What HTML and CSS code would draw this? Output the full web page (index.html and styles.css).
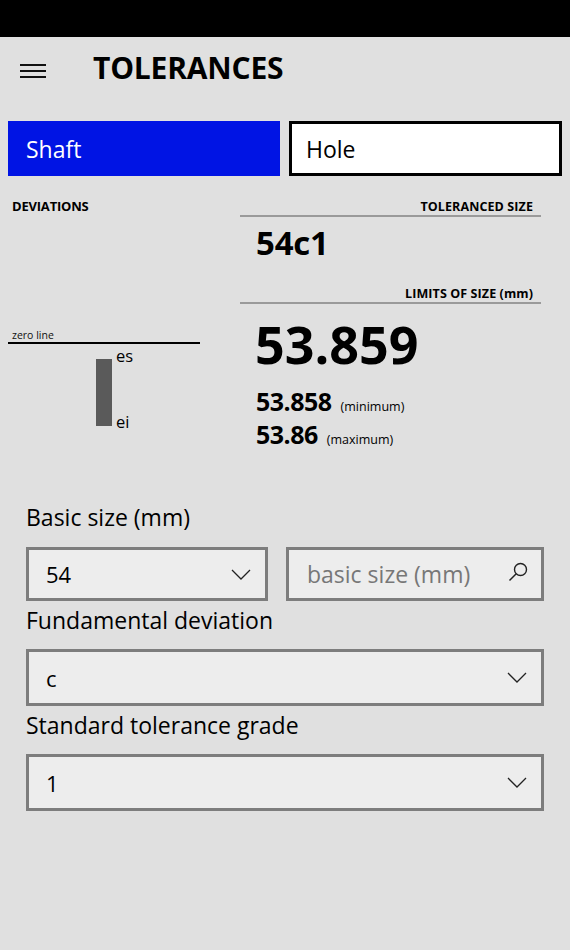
FILE: index.html
```html
<!DOCTYPE html>
<html>
<head>
<meta charset="utf-8">
<link rel="stylesheet" href="styles.css">
</head>
<body>
<div class="statusbar"></div>
<header class="header">
  <div class="hamburger"><span></span><span></span><span></span></div>
  <h1 class="title">TOLERANCES</h1>
</header>
<div class="tabs">
  <div class="tab tab-active">Shaft</div>
  <div class="tab tab-inactive">Hole</div>
</div>
<section class="results">
  <div class="deviations">
    <div class="dev-title">DEVIATIONS</div>
    <div class="zero-label">zero line</div>
    <div class="zero-line"></div>
    <div class="dev-chart">
      <div class="dev-bar"></div>
      <div class="dev-labels"><span>es</span><span>ei</span></div>
    </div>
  </div>
  <div class="sizes">
    <div class="section-head">TOLERANCED SIZE</div>
    <div class="tol-size">54c1</div>
    <div class="section-head limits-head">LIMITS OF SIZE (mm)</div>
    <div class="mean-size">53.859</div>
    <div class="limit limit-first"><span class="limit-val">53.858</span><span class="limit-note">(minimum)</span></div>
    <div class="limit"><span class="limit-val">53.86</span><span class="limit-note">(maximum)</span></div>
  </div>
</section>
<section class="form">
  <div class="field-label">Basic size (mm)</div>
  <div class="row">
    <div class="combo"><span>54</span>
      <svg class="chev" viewBox="0 0 20 11" width="20" height="11"><path d="M1 1 L10 10 L19 1" fill="none" stroke="#222" stroke-width="1.3"/></svg>
    </div>
    <div class="search"><span class="placeholder">basic size (mm)</span>
      <svg class="search-icon" viewBox="0 0 22 22" width="22" height="22"><circle cx="13.5" cy="8.5" r="6" fill="none" stroke="#222" stroke-width="1.4"/><path d="M9.2 12.8 L2.5 19.5" stroke="#222" stroke-width="1.5" fill="none"/></svg>
    </div>
  </div>
  <div class="field-label">Fundamental deviation</div>
  <div class="combo combo-wide"><span>c</span>
    <svg class="chev" viewBox="0 0 20 11" width="20" height="11"><path d="M1 1 L10 10 L19 1" fill="none" stroke="#222" stroke-width="1.3"/></svg>
  </div>
  <div class="field-label">Standard tolerance grade</div>
  <div class="combo combo-wide"><span>1</span>
    <svg class="chev" viewBox="0 0 20 11" width="20" height="11"><path d="M1 1 L10 10 L19 1" fill="none" stroke="#222" stroke-width="1.3"/></svg>
  </div>
</section>
</body>
</html>
```
FILE: styles.css
```css
* { box-sizing: border-box; }
html, body { margin: 0; padding: 0; }
body {
  width: 570px;
  height: 950px;
  background: #e0e0e0;
  font-family: "Open Sans", "Noto Sans", sans-serif;
  color: #000;
  overflow: hidden;
}
.statusbar { height: 37px; background: #000; }
.header {
  height: 84px;
  display: flex;
  align-items: flex-start;
  padding-top: 13px;
}
.hamburger {
  width: 26px;
  margin-left: 20px;
  margin-top: 14px;
  display: flex;
  flex-direction: column;
  gap: 4px;
}
.hamburger span { display: block; height: 2px; background: #111; }
.title {
  margin: 0 0 0 47px;
  font-size: 30px;
  line-height: 36px;
  font-weight: 700;
  letter-spacing: -0.2px;
}
.tabs {
  display: grid;
  grid-template-columns: 272px 273px;
  gap: 9px;
  margin: 0 8px;
  height: 55px;
}
.tab {
  display: flex;
  align-items: center;
  font-size: 23px;
}
.tab-active { background: #0014e4; color: #fff; padding-left: 18px; }
.tab-inactive { background: #fff; border: 3px solid #000; padding-left: 14px; }

.results {
  display: grid;
  grid-template-columns: 192px 301px;
  gap: 40px;
  margin-left: 8px;
  height: 310px;
}
.deviations { padding-top: 22px; }
.dev-title { font-size: 13px; font-weight: 700; padding-left: 4px; line-height: 16px; letter-spacing: -0.2px; }
.zero-label { margin-top: 114px; font-size: 10.5px; padding-left: 4px; line-height: 14px; color: #111; }
.zero-line { height: 2px; background: #000; }
.dev-chart { display: flex; margin-left: 88px; margin-top: 15px; }
.dev-bar { width: 16px; height: 67px; background: #5a5a5a; }
.dev-labels {
  display: flex;
  flex-direction: column;
  justify-content: space-between;
  font-size: 16.5px;
  line-height: 18px;
  margin-top: -12px;
  height: 84px;
  padding-left: 4px;
}
.sizes { padding-top: 22px; }
.section-head {
  font-size: 12.5px;
  font-weight: 700;
  text-align: right;
  padding-right: 8px;
  line-height: 17px;
  border-bottom: 2px solid #9a9a9a;
  letter-spacing: 0.1px;
}
.tol-size {
  font-size: 33px;
  font-weight: 700;
  line-height: 44px;
  padding-left: 16px;
  margin-top: 4px;
  letter-spacing: -0.2px;
}
.limits-head { margin-top: 20px; }
.mean-size {
  font-size: 52px;
  font-weight: 700;
  line-height: 72px;
  padding-left: 15px;
  margin-top: 4px;
  letter-spacing: 0px;
  height: 72px;
}
.limit { padding-left: 16px; display: flex; align-items: baseline; height: 33px; line-height: 33px; }
.limit-first { margin-top: 5px; }
.limit-val { font-size: 25px; font-weight: 700; letter-spacing: -0.5px; line-height: 33px; }
.limit-note { font-size: 12.5px; margin-left: 9px; line-height: 33px; }

.form { padding: 0 26px; }
.field-label { font-size: 23px; line-height: 30px; margin-top: 16px; margin-bottom: 15px; }
.row {
  display: grid;
  grid-template-columns: 242px 258px;
  gap: 18px;
}
.combo, .search {
  height: 54px;
  border: 3px solid #7d7d7d;
  background: #ededed;
  display: flex;
  align-items: center;
  justify-content: space-between;
  font-size: 22px;
}
.combo { padding: 0 14px 0 17px; }
.search { padding: 0 12px 0 18px; }
.placeholder { color: #777; font-size: 23px; }
.combo-wide { height: 57px; }
.row + .field-label { margin-top: 4px; margin-bottom: 14px; }
.combo-wide + .field-label { margin-top: 4px; margin-bottom: 14px; }
.search-icon { margin-bottom: 4px; }
```
